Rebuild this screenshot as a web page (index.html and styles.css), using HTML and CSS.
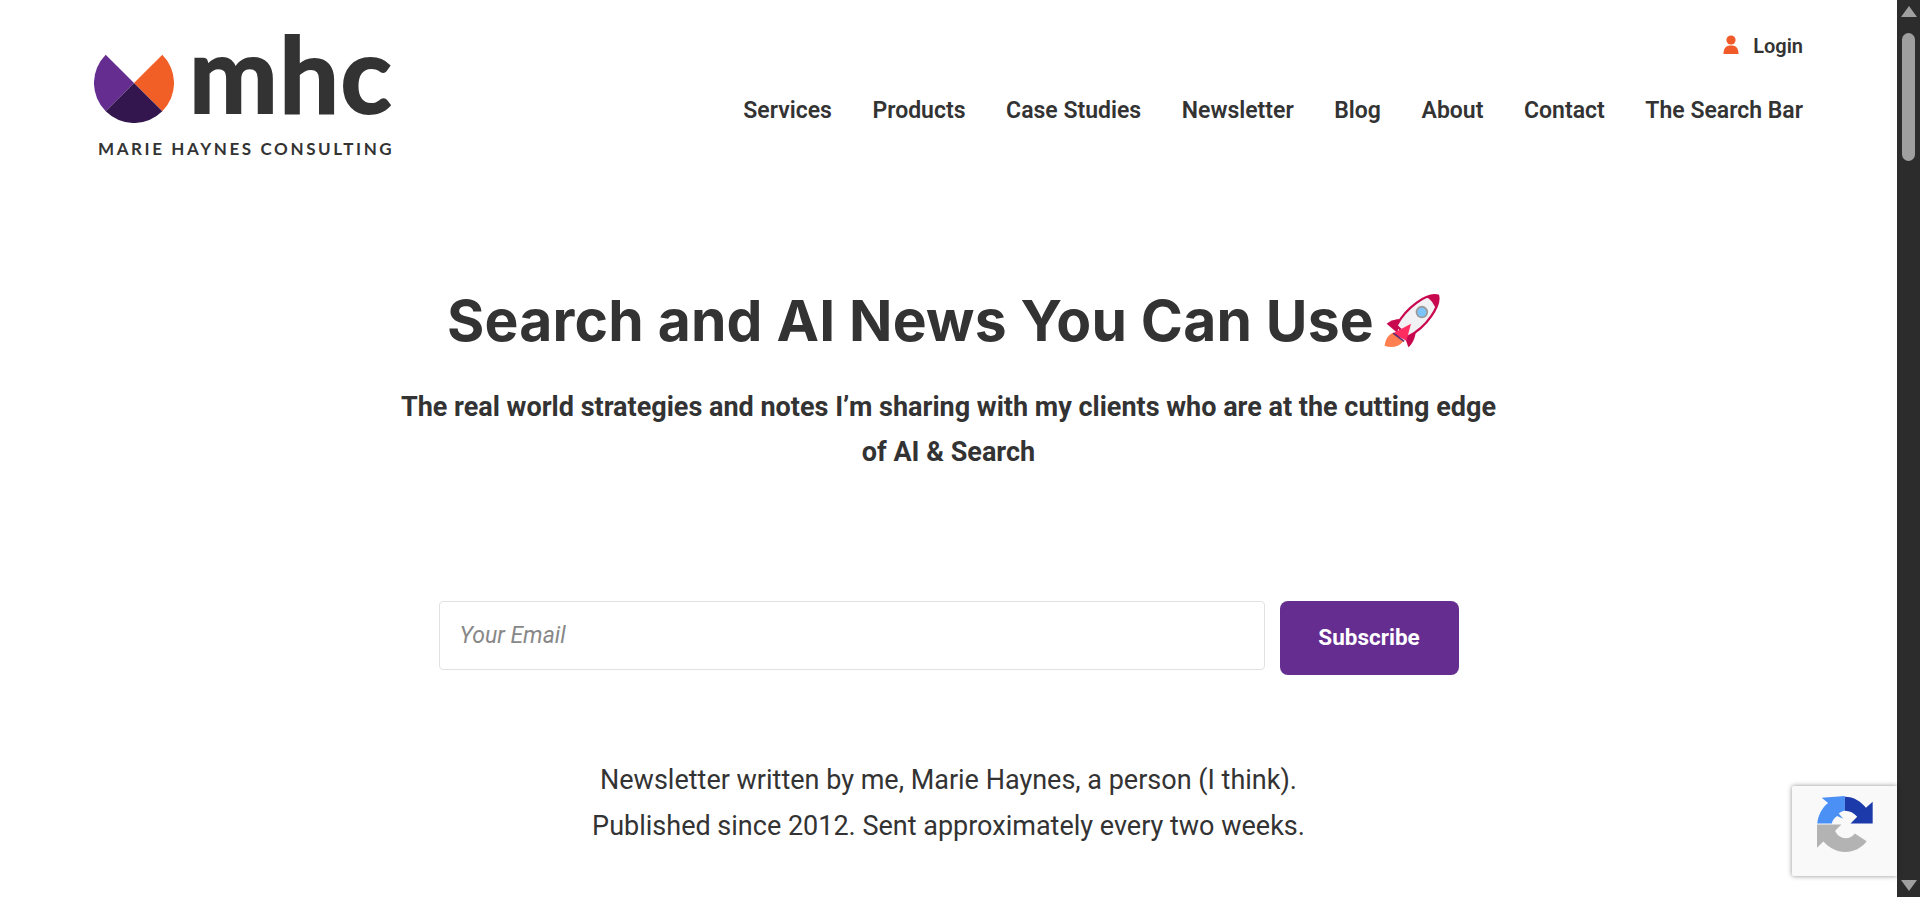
FILE: index.html
```html
<!DOCTYPE html>
<html lang="en">
<head>
    <meta charset="UTF-8">
    <meta name="viewport" content="width=device-width, initial-scale=1.0">
    <title>Search and AI News You Can Use</title>
    <link rel="stylesheet" href="styles.css">
</head>
<body>
    <div class="page">
        <!-- Header -->
        <header class="site-header">
            <a class="logo" href="#">
                <div class="logo-top">
                    <svg class="logo-mark" viewBox="0 0 80 80" width="80" height="80">
                        <path d="M40 40 L11.7 11.7 A40 40 0 0 0 11.7 68.3 Z" fill="#662d91"/>
                        <path d="M40 40 L68.3 11.7 A40 40 0 0 1 68.3 68.3 Z" fill="#f15f27"/>
                        <path d="M40 40 L68.3 68.3 A40 40 0 0 1 11.7 68.3 Z" fill="#33164d"/>
                    </svg>
                    <span class="logo-word">mhc</span>
                </div>
                <div class="logo-tagline">MARIE HAYNES CONSULTING</div>
            </a>
            <div class="header-right">
                <a class="login" href="#">
                    <svg class="login-icon" viewBox="0 0 16 20" width="16" height="20">
                        <circle cx="8" cy="5" r="4.6" fill="#f15a29"/>
                        <path d="M0.5 19 C0.5 13 3 10.5 8 10.5 C13 10.5 15.500 13 15.500 19 Z" fill="#f15a29"/>
                    </svg>
                    Login
                </a>
                <nav class="main-nav">
                    <a href="#">Services</a>
                    <a href="#">Products</a>
                    <a href="#">Case Studies</a>
                    <a href="#">Newsletter</a>
                    <a href="#">Blog</a>
                    <a href="#">About</a>
                    <a href="#">Contact</a>
                    <a href="#">The Search Bar</a>
                </nav>
            </div>
        </header>

        <!-- Hero -->
        <main class="hero">
            <h1 class="hero-title">
                Search and AI News You Can Use
                <svg class="rocket" viewBox="40 5 170 170" width="56" height="56">
                    <path d="M42 165 C44 145 55 130 68 126 L98 152 C85 168 62 174 42 165 Z" fill="#ff7f50"/>
                    <path d="M48 98 C58 90 74 84 92 84 L80 126 Z" fill="#c8094f"/>
                    <path d="M136 126 C134 144 126 160 114 170 L102 136 Z" fill="#c8094f"/>
                    <path d="M204 13 C212 42 172 108 112 138 L78 104 C108 48 170 4 204 13 Z" fill="#f2f2f4" stroke="#c8094f" stroke-width="7"/>
                    <path d="M205 12 C208 22 204 36 196 50 C190 36 180 22 168 18 C182 11 195 9 205 12 Z" fill="#c8094f"/>
                    <circle cx="155" cy="63" r="19" fill="#9b9b9b"/>
                    <circle cx="155" cy="63" r="13.500" fill="#7cc4fa"/>
                    <path d="M122 98 L108 150 L66 128 Z" fill="#ff2d60"/>
                    <path d="M68 127 L101 152" stroke="#5b2a6e" stroke-width="5" fill="none"/>
                </svg>
            </h1>
            <p class="hero-sub">The real world strategies and notes I’m sharing with my clients who are at the cutting edge of AI &amp; Search</p>

            <form class="subscribe-form">
                <input class="email-input" type="email" placeholder="Your Email">
                <button class="subscribe-button" type="button">Subscribe</button>
            </form>

            <div class="hero-note">
                <p>Newsletter written by me, Marie Haynes, a person (I think).</p>
                <p>Published since 2012. Sent approximately every two weeks.</p>
            </div>
        </main>

        <!-- reCAPTCHA badge -->
        <div class="recaptcha">
            <svg viewBox="112 78 167 167" width="56" height="56">
                <path d="M113 160 C115 135 128 112 145 99 L126 83 L195 78 L195 122 C188 123 182 126 177 130 L190 146 L172 138 C164 144 158 151 156 160 Z" fill="#4a90f5"/>
                <path d="M195 80 C222 80 243 94 258 113 L278 95 L278 160 L212 160 L232 140 C222 128 210 122 195 122 Z" fill="#1c3aa9"/>
                <path d="M112 163 L185 163 L166 182 C172 196 184 204 198 204 C208 204 218 199 225 190 L260 213 C245 233 222 245 196 245 C170 245 148 233 131 214 L112 232 Z" fill="#b3b3b3"/>
            </svg>
        </div>
    </div>

    <!-- Scrollbar -->
    <div class="scrollbar">
        <div class="scroll-arrow up"></div>
        <div class="scroll-track">
            <div class="scroll-thumb"></div>
        </div>
        <div class="scroll-arrow down"></div>
    </div>
</body>
</html>
```

FILE: styles.css
```css
* {
    margin: 0;
    padding: 0;
    box-sizing: border-box;
}

html, body {
    height: 100%;
    overflow: hidden;
}

body {
    display: flex;
    background: #fff;
    color: #333;
    font-family: 'Roboto', sans-serif;
}

a {
    color: inherit;
    text-decoration: none;
}

.page {
    flex: 1;
    min-width: 0;
    overflow: hidden;
}

/* Header */
.site-header {
    display: flex;
    justify-content: space-between;
    align-items: flex-start;
    padding: 24px 94px 0 94px;
}

.logo {
    display: block;
    width: 300px;
}

.logo-top {
    display: flex;
    align-items: flex-end;
    gap: 15px;
    height: 99px;
}

.logo-mark {
    flex: none;
}

.logo-word {
    margin-bottom: 5px;
    font-family: 'Lato', sans-serif;
    font-weight: 700;
    font-size: 106px;
    line-height: 91px;
    letter-spacing: 1.5px;
    color: #333;
    -webkit-text-stroke: 2px #333;
}

.logo-tagline {
    margin-top: 18px;
    margin-left: 4px;
    font-family: 'Lato', sans-serif;
    font-weight: 700;
    font-size: 17px;
    line-height: 16px;
    letter-spacing: 2.6px;
    white-space: nowrap;
}

.header-right {
    display: flex;
    flex-direction: column;
    align-items: flex-end;
    padding-top: 11px;
}

.login {
    display: flex;
    align-items: center;
    gap: 14px;
    font-size: 20px;
    font-weight: 600;
    line-height: 22px;
}

.login-icon {
    margin-top: -3px;
}

.main-nav {
    display: flex;
    gap: 40.6px;
    margin-top: 40px;
    font-size: 23px;
    font-weight: 600;
    line-height: 28px;
}

/* Hero */
.hero {
    display: flex;
    flex-direction: column;
    align-items: center;
    padding-top: 131px;
}

.hero-title {
    display: flex;
    align-items: center;
    gap: 10px;
    padding-right: 10px;
    font-family: 'Inter', sans-serif;
    font-size: 57px;
    font-weight: 700;
    line-height: 66px;
    letter-spacing: 0.2px;
    white-space: nowrap;
}

.hero-sub {
    width: 1110px;
    margin-top: 31px;
    font-size: 27px;
    font-weight: 700;
    line-height: 45px;
    text-align: center;
}

.subscribe-form {
    display: flex;
    align-items: flex-start;
    gap: 15px;
    margin-top: 126px;
}

.email-input {
    width: 826px;
    height: 69px;
    padding: 0 20px;
    border: 1px solid #e2e2e4;
    border-radius: 4px;
    font-family: 'Roboto', sans-serif;
    font-size: 23px;
    outline: none;
}

.email-input::placeholder {
    color: #888;
    font-style: italic;
}

.subscribe-button {
    width: 179px;
    height: 74px;
    padding-bottom: 2px;
    border: none;
    border-radius: 8px;
    background: #662d91;
    color: #fff;
    font-family: 'Roboto', sans-serif;
    font-size: 22.500px;
    font-weight: 700;
}

.hero-note {
    margin-top: 83px;
    font-size: 27px;
    line-height: 45.5px;
    text-align: center;
}

/* reCAPTCHA badge */
.recaptcha {
    position: fixed;
    left: 1792px;
    top: 786px;
    width: 105px;
    height: 90px;
    padding: 10px 0 0 25px;
    background: #f9f9f9;
    border-radius: 2px 0 0 2px;
    box-shadow: 0 0 5px rgba(0, 0, 0, 0.45);
}

/* Scrollbar */
.scrollbar {
    display: flex;
    flex-direction: column;
    flex: none;
    width: 23px;
    height: 897px;
    background: #2c2c2c;
}

.scroll-arrow {
    width: 0;
    height: 0;
    margin: 6px auto;
    border-left: 8px solid transparent;
    border-right: 8px solid transparent;
}

.scroll-arrow.up {
    border-bottom: 11px solid #a0a0a0;
}

.scroll-arrow.down {
    border-top: 11px solid #a0a0a0;
}

.scroll-track {
    flex: 1;
}

.scroll-thumb {
    width: 13px;
    height: 128px;
    margin: 10px auto 0;
    border-radius: 7px;
    background: #9f9f9f;
}
```
